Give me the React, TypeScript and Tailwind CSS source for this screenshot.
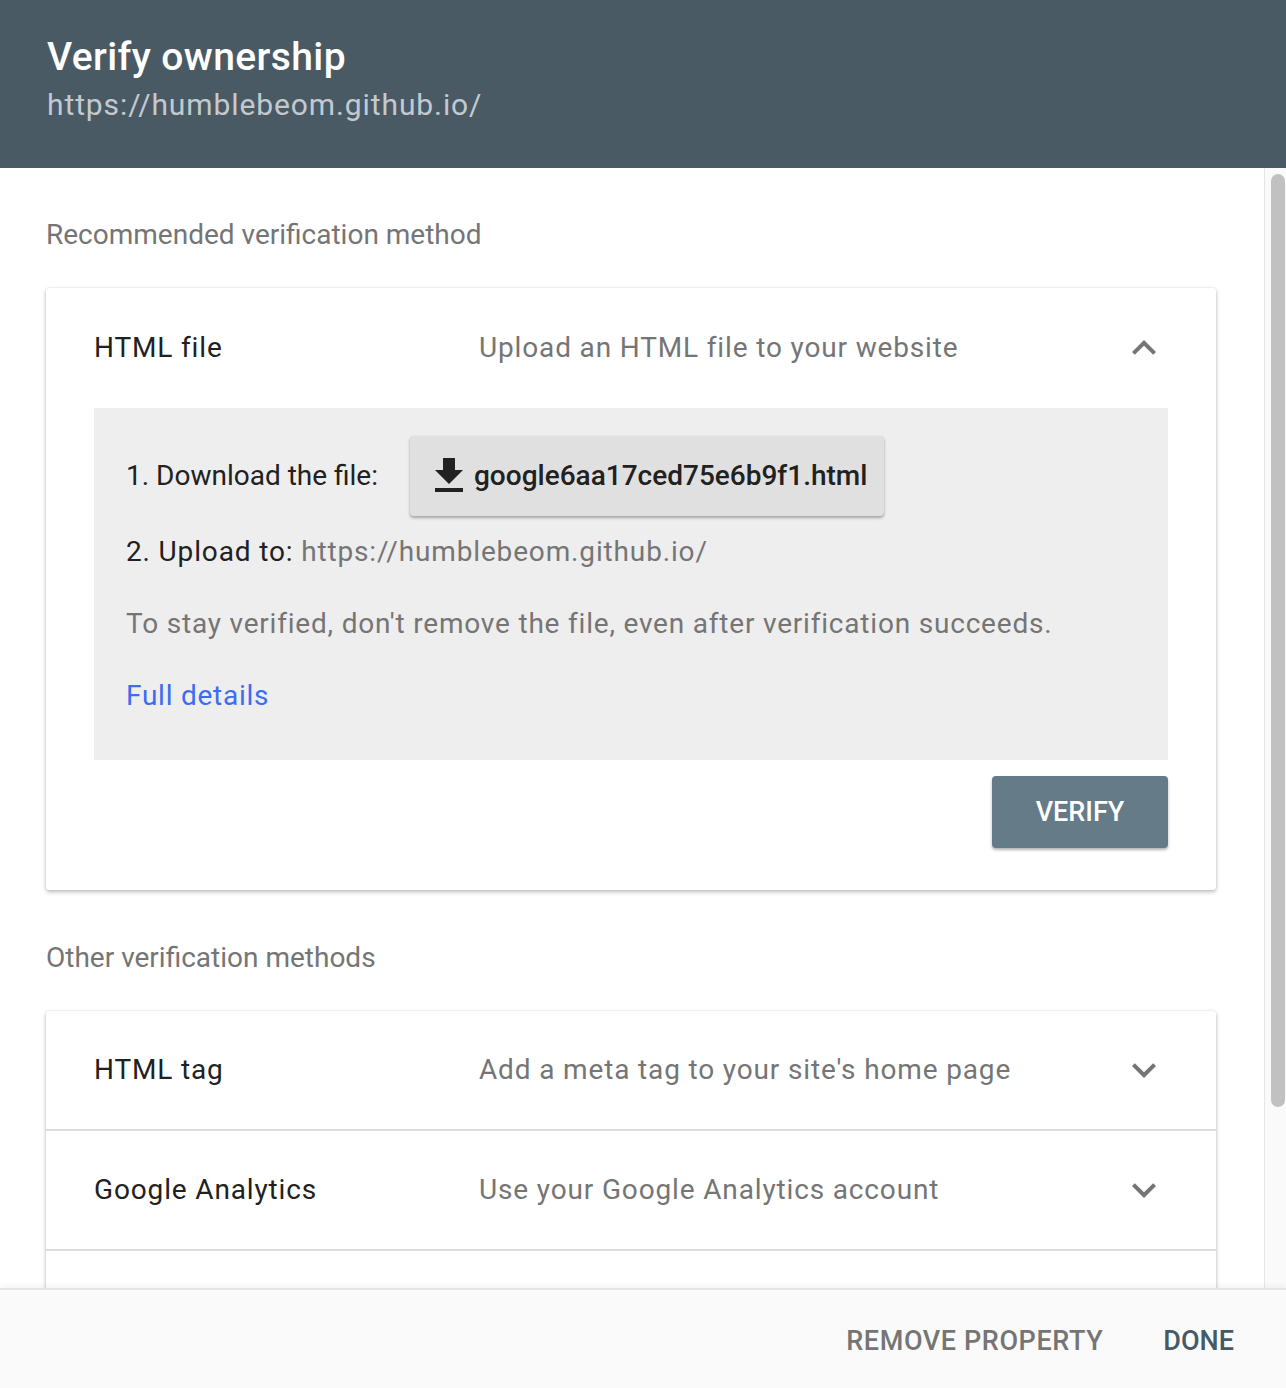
import React from "react";

const font = { fontFamily: "Roboto, 'Noto Sans', sans-serif" };

function Chevron({ up }: { up?: boolean }) {
  return (
    <svg width="48" height="48" viewBox="0 0 24 24" className="shrink-0">
      <path
        fill="#757575"
        d={
          up
            ? "M12 8l-6 6 1.41 1.41L12 10.83l4.59 4.58L18 14z"
            : "M16.59 8.59L12 13.17 7.41 8.59 6 10l6 6 6-6z"
        }
      />
    </svg>
  );
}

function DownloadIcon() {
  return (
    <svg width="48" height="48" viewBox="0 0 24 24" className="shrink-0">
      <path fill="#212121" d="M19 9h-4V3H9v6H5l7 7 7-7zM5 18v2h14v-2H5z" />
    </svg>
  );
}

function MethodRow({ title, desc }: { title: string; desc: string }) {
  return (
    <div className="flex h-[120px] items-center border-b-2 border-[#dcdcdc] px-[48px] text-[28px] tracking-[0.85px]">
      <div className="w-[385px] text-[#212121]">{title}</div>
      <div className="flex-1 text-[#757575]">{desc}</div>
      <Chevron />
    </div>
  );
}

export default function App() {
  return (
    <div className="flex h-[1388px] w-[1286px] flex-col overflow-hidden bg-white" style={font}>
      <header className="h-[168px] shrink-0 bg-[#4a5a65] pl-[47px] pt-[31px]">
        <h1 className="text-[39px] font-medium leading-[52px] tracking-[0.4px] text-white">Verify ownership</h1>
        <div className="mt-[2px] text-[30px] leading-[40px] tracking-[0.9px] text-[#c3cacf]">
          https://humblebeom.github.io/
        </div>
      </header>

      <div className="flex min-h-0 flex-1">
        <main className="min-w-0 flex-1 overflow-hidden pl-[46px] pr-[48px] pt-[51px]">
          <div className="text-[28px] leading-[32px] text-[#757575]">Recommended verification method</div>

          <section className="mt-[37px] rounded-[3px] bg-white px-[48px] pb-[42px] shadow-[0_2px_4px_rgba(0,0,0,0.25),0_0_2px_rgba(0,0,0,0.12)]">
            <div className="flex h-[120px] items-center text-[28px] tracking-[0.85px]">
              <div className="w-[385px] text-[#212121]">HTML file</div>
              <div className="flex-1 text-[#757575]">Upload an HTML file to your website</div>
              <Chevron up />
            </div>

            <div className="bg-[#eeeeee] pb-[46px] pl-8 pt-[28px] text-[28px] leading-[36px]">
              <div className="flex h-[80px] items-center gap-[32px]">
                <span className="text-[#212121]">1. Download the file:</span>
                <button className="flex h-[80px] items-center rounded-[4px] bg-[#e0e0e0] pl-[15px] pr-[17px] font-medium text-[#212121] shadow-[0_2px_3px_rgba(0,0,0,0.3),0_0_1px_rgba(0,0,0,0.12)]">
                  <DownloadIcon />
                  <span className="ml-[1px]">google6aa17ced75e6b9f1.html</span>
                </button>
              </div>
              <div className="mt-[18px] tracking-[0.85px]">
                <span className="text-[#212121]">2. Upload to: </span>
                <span className="text-[#757575]">https://humblebeom.github.io/</span>
              </div>
              <div className="mt-[36px] tracking-[0.8px] text-[#757575]">
                To stay verified, don't remove the file, even after verification succeeds.
              </div>
              <div className="mt-[36px] tracking-[0.75px] text-[#3b6cf2]">Full details</div>
            </div>

            <div className="mt-4 flex justify-end">
              <button className="h-[72px] w-[176px] rounded-[4px] bg-[#657b88] text-[27px] font-medium text-white shadow-[0_2px_3px_rgba(0,0,0,0.3)]">
                VERIFY
              </button>
            </div>
          </section>

          <div className="mt-[52px] text-[28px] leading-[32px] text-[#757575]">Other verification methods</div>

          <section className="mt-[37px] rounded-[3px] bg-white shadow-[0_2px_4px_rgba(0,0,0,0.25),0_0_2px_rgba(0,0,0,0.12)]">
            <MethodRow title="HTML tag" desc="Add a meta tag to your site's home page" />
            <MethodRow title="Google Analytics" desc="Use your Google Analytics account" />
            <div className="h-[120px]" />
          </section>
        </main>

        <div className="w-[22px] shrink-0 border-l border-[#e6e6e6] bg-[#fafafa] pt-[6px]">
          <div className="ml-[6px] h-[933px] w-[14px] rounded-full bg-[#c1c1c1]" />
        </div>
      </div>

      <footer className="flex h-[100px] shrink-0 items-center justify-end gap-[60px] border-t-2 border-[#e4e4e4] bg-[#fafafa] pr-[52px] pt-[4px] text-[27px] font-medium shadow-[0_-2px_6px_rgba(0,0,0,0.05)]">
        <button className="tracking-[0.6px] text-[#757575]">REMOVE PROPERTY</button>
        <button className="text-[#455a64]">DONE</button>
      </footer>
    </div>
  );
}
